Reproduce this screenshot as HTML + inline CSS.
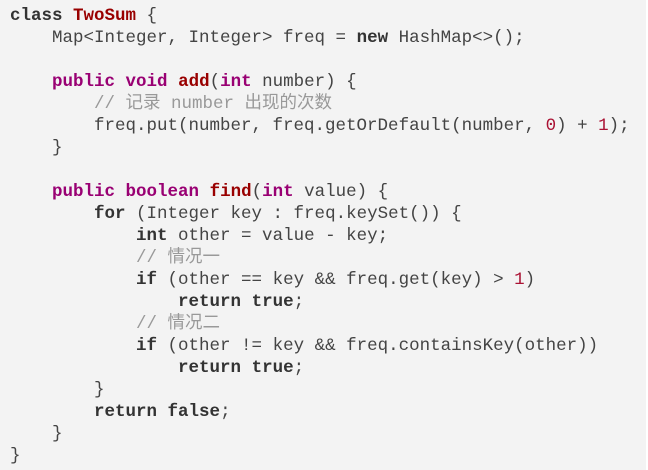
<!DOCTYPE html>
<html><head><meta charset="utf-8"><style>
html,body{margin:0;padding:0;background:#fff}
.c{position:absolute;left:0;top:0;width:646px;height:470px;background:#f3f3f3;}
pre{margin:0;position:absolute;left:10px;top:5px;font-family:"Liberation Mono","Noto Sans CJK SC",monospace;font-size:17.5px;line-height:22px;color:#444;}
b{color:#333;font-weight:bold}
.t{color:#990000;font-weight:bold}
.p{color:#990073;font-weight:bold}
.f{color:#990000;font-weight:bold}
.m{color:#999}
.n{color:#aa1133}
</style></head><body><div class="c"><pre><b>class</b> <span class="t">TwoSum</span> {
    Map&lt;Integer, Integer&gt; freq = <b>new</b> HashMap&lt;&gt;();

    <span class="p">public</span> <span class="p">void</span> <span class="f">add</span>(<span class="p">int</span> number) {
        <span class="m">// 记录 number 出现的次数</span>
        freq.put(number, freq.getOrDefault(number, <span class="n">0</span>) + <span class="n">1</span>);
    }

    <span class="p">public</span> <span class="p">boolean</span> <span class="f">find</span>(<span class="p">int</span> value) {
        <b>for</b> (Integer key : freq.keySet()) {
            <b>int</b> other = value - key;
            <span class="m">// 情况一</span>
            <b>if</b> (other == key &amp;&amp; freq.get(key) &gt; <span class="n">1</span>)
                <b>return</b> <b>true</b>;
            <span class="m">// 情况二</span>
            <b>if</b> (other != key &amp;&amp; freq.containsKey(other))
                <b>return</b> <b>true</b>;
        }
        <b>return</b> <b>false</b>;
    }
}</pre></div></body></html>
